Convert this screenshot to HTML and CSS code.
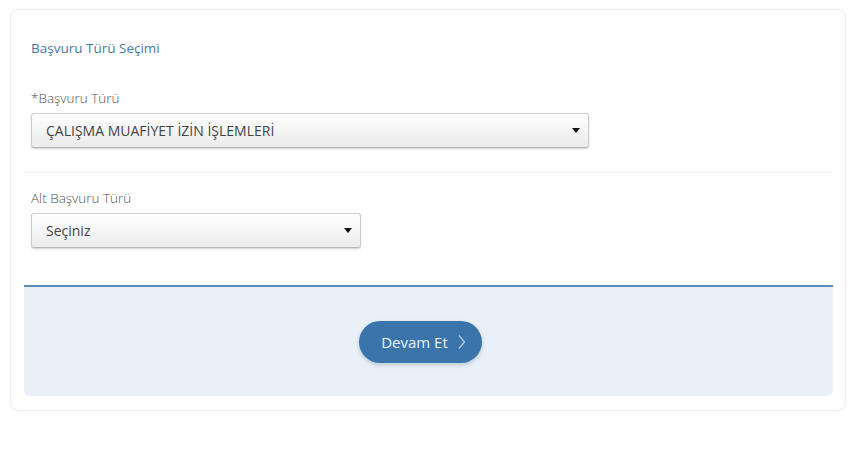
FILE: index.html
```html
<!DOCTYPE html>
<html lang="tr">

<head>
    <meta charset="UTF-8">
    <meta name="viewport" content="width=device-width, initial-scale=1.0">
    <title>Başvuru Türü Seçimi</title>
    <link rel="stylesheet" href="styles.css">
</head>

<body>
    <div class="card">
        <div class="form-body">
            <div class="group">
                <h2 class="section-title">Başvuru Türü Seçimi</h2>
                <label class="field-label" for="basvuruTuru">*Başvuru Türü</label>
                <div class="select-wrap wide">
                    <select id="basvuruTuru">
                        <option>ÇALIŞMA MUAFİYET İZİN İŞLEMLERİ</option>
                    </select>
                </div>
            </div>
            <div class="group last">
                <label class="field-label" for="altBasvuruTuru">Alt Başvuru Türü</label>
                <div class="select-wrap narrow">
                    <select id="altBasvuruTuru">
                        <option>Seçiniz</option>
                    </select>
                </div>
            </div>
        </div>

        <div class="form-footer">
            <button class="btn-next" type="button">
                Devam Et
                <svg width="8" height="16" viewBox="0 0 8 16" fill="none">
                    <path d="M1 1.5 L6.5 8 L1 14.5" stroke="#bcd3ea" stroke-width="1.2" />
                </svg>
            </button>
        </div>
    </div>
</body>

</html>
```

FILE: styles.css
```css
/* General Styles */
body {
    font-family: 'Open Sans', 'Liberation Sans', sans-serif;
    background-color: #ffffff;
    margin: 0;
    padding: 9px 4px 0 10px;
}

.card {
    width: 809px;
    height: 386px;
    padding: 0 12px 14px 13px;
    border: 1px solid #ececec;
    border-radius: 8px;
    display: flex;
    flex-direction: column;
}

.form-body {
    flex: 1;
}

.group {
    padding: 29px 7px 24px;
    border-bottom: 1px solid #f2f2f2;
}

.group.last {
    padding-top: 16px;
    border-bottom: none;
}

.section-title {
    margin: 0 0 32px;
    font-size: 13.5px;
    line-height: 18px;
    font-weight: 400;
    color: #4a79a5;
}

.field-label {
    display: block;
    margin-bottom: 6px;
    font-size: 13.5px;
    line-height: 18px;
    font-weight: 300;
    color: #555555;
}

.select-wrap {
    position: relative;
    height: 35px;
}

.select-wrap.wide {
    width: 558px;
}

.select-wrap.narrow {
    width: 330px;
}

.select-wrap select {
    appearance: none;
    -webkit-appearance: none;
    width: 100%;
    height: 100%;
    padding: 0 30px 0 14px;
    font-family: inherit;
    font-size: 14px;
    color: #444444;
    background: linear-gradient(#ffffff, #ebebeb);
    border: 1px solid #cfcfcf;
    border-bottom-color: #b5b5b5;
    border-radius: 3px;
    box-shadow: 0 1px 2px rgba(0, 0, 0, 0.18);
}

.select-wrap::after {
    content: "";
    position: absolute;
    right: 9px;
    top: 15px;
    border-left: 4px solid transparent;
    border-right: 4px solid transparent;
    border-top: 5px solid #111111;
}

.form-footer {
    height: 109px;
    padding-right: 16px;
    background-color: #eaf0f7;
    border-top: 2px solid #5d8cb5;
    border-radius: 0 0 6px 6px;
    display: flex;
    justify-content: center;
    align-items: center;
}

.btn-next {
    width: 123px;
    height: 42px;
    border: none;
    border-radius: 21px;
    background-color: #3a74aa;
    color: #eef4fa;
    font-family: inherit;
    font-size: 15px;
    display: flex;
    align-items: center;
    justify-content: center;
    gap: 10px;
    padding: 0 0 0 6px;
    box-shadow: 0 2px 4px rgba(40, 80, 130, 0.25);
    cursor: pointer;
}
```
